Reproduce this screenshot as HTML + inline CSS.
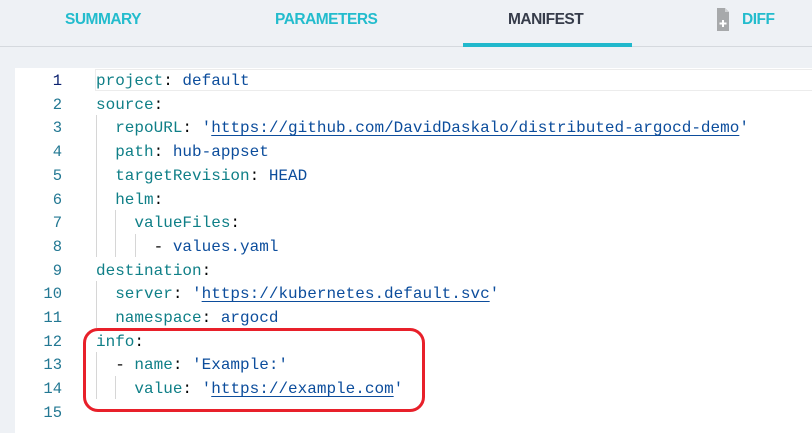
<!DOCTYPE html>
<html><head><style>
*{margin:0;padding:0;box-sizing:border-box}
body{width:812px;height:433px;background:#eef1f5;position:relative;overflow:hidden;font-family:"Liberation Sans",sans-serif}
.tab{position:absolute;top:11px;font-size:15.5px;font-weight:bold;color:#23bccd;letter-spacing:-0.5px}
.hdr{position:absolute;left:0;top:46px;width:812px;height:1px;background:#d5d9de}
.ul{position:absolute;left:463px;top:43px;width:169px;height:4px;background:#20b8cc}
.ed{position:absolute;left:15px;top:68px;width:797px;height:365px;background:#fff}
.hl{position:absolute;left:95px;top:69px;width:717px;height:22px;border:1px solid #ececec;border-right:none}
.ln{position:absolute;left:0;width:62px;text-align:right;font-family:"Liberation Mono",monospace;font-size:15.5px;color:#237893;line-height:23.7px}
.code{position:absolute;left:96px;font-family:"Liberation Mono",monospace;font-size:16px;line-height:23.7px;white-space:pre;color:#000}
.k{color:#0f7f87}.v{color:#0c4d9c}.u{color:#0c4d9c;text-decoration:underline;text-underline-offset:3px}
.g{position:absolute;width:1px;background:#d6d6d6}
.box{position:absolute;left:83px;top:328px;width:342px;height:84px;border:3px solid #e8202a;border-radius:15px}
</style></head><body>
<div class="tab" style="left:65px">SUMMARY</div>
<div class="tab" style="left:275px">PARAMETERS</div>
<div class="tab" style="left:508px;color:#363c4a">MANIFEST</div>
<svg style="position:absolute;left:717px;top:8px" width="12" height="23" viewBox="0 0 12 23"><path d="M0 0H8L12 4V23H0Z" fill="#a7a9ab"/><path d="M8 0V4H12" fill="#d0d2d4"/><path d="M6 12V19M2.5 15.5H9.5" stroke="#fff" stroke-width="2"/></svg>
<div class="tab" style="left:742px">DIFF</div>
<div class="hdr"></div><div class="ul"></div>
<div class="ed"></div>
<div class="hl"></div>
<div class="g" style="left:96px;top:115px;height:142px"></div>
<div class="g" style="left:115px;top:210px;height:47px"></div>
<div class="g" style="left:135px;top:234px;height:23px"></div>
<div class="g" style="left:96px;top:281px;height:47px"></div>
<div class="g" style="left:96px;top:352px;height:47px"></div>
<div class="g" style="left:115px;top:376px;height:23px"></div>
<div class="ln" style="top:70px"><span style="color:#0b216f">1</span><br>2<br>3<br>4<br>5<br>6<br>7<br>8<br>9<br>10<br>11<br>12<br>13<br>14<br>15</div>
<div class="code" style="top:70px"><span class="k">project</span>: <span class="v">default</span>
<span class="k">source</span>:
  <span class="k">repoURL</span>: <span class="v">'<span class="u">https://github.com/DavidDaskalo/distributed-argocd-demo</span>'</span>
  <span class="k">path</span>: <span class="v">hub-appset</span>
  <span class="k">targetRevision</span>: <span class="v">HEAD</span>
  <span class="k">helm</span>:
    <span class="k">valueFiles</span>:
      - <span class="v">values.yaml</span>
<span class="k">destination</span>:
  <span class="k">server</span>: <span class="v">'<span class="u">https://kubernetes.default.svc</span>'</span>
  <span class="k">namespace</span>: <span class="v">argocd</span>
<span class="k">info</span>:
  - <span class="k">name</span>: <span class="v">'Example:'</span>
    <span class="k">value</span>: <span class="v">'<span class="u">https://example.com</span>'</span>
</div>
<div class="box"></div>
</body></html>
